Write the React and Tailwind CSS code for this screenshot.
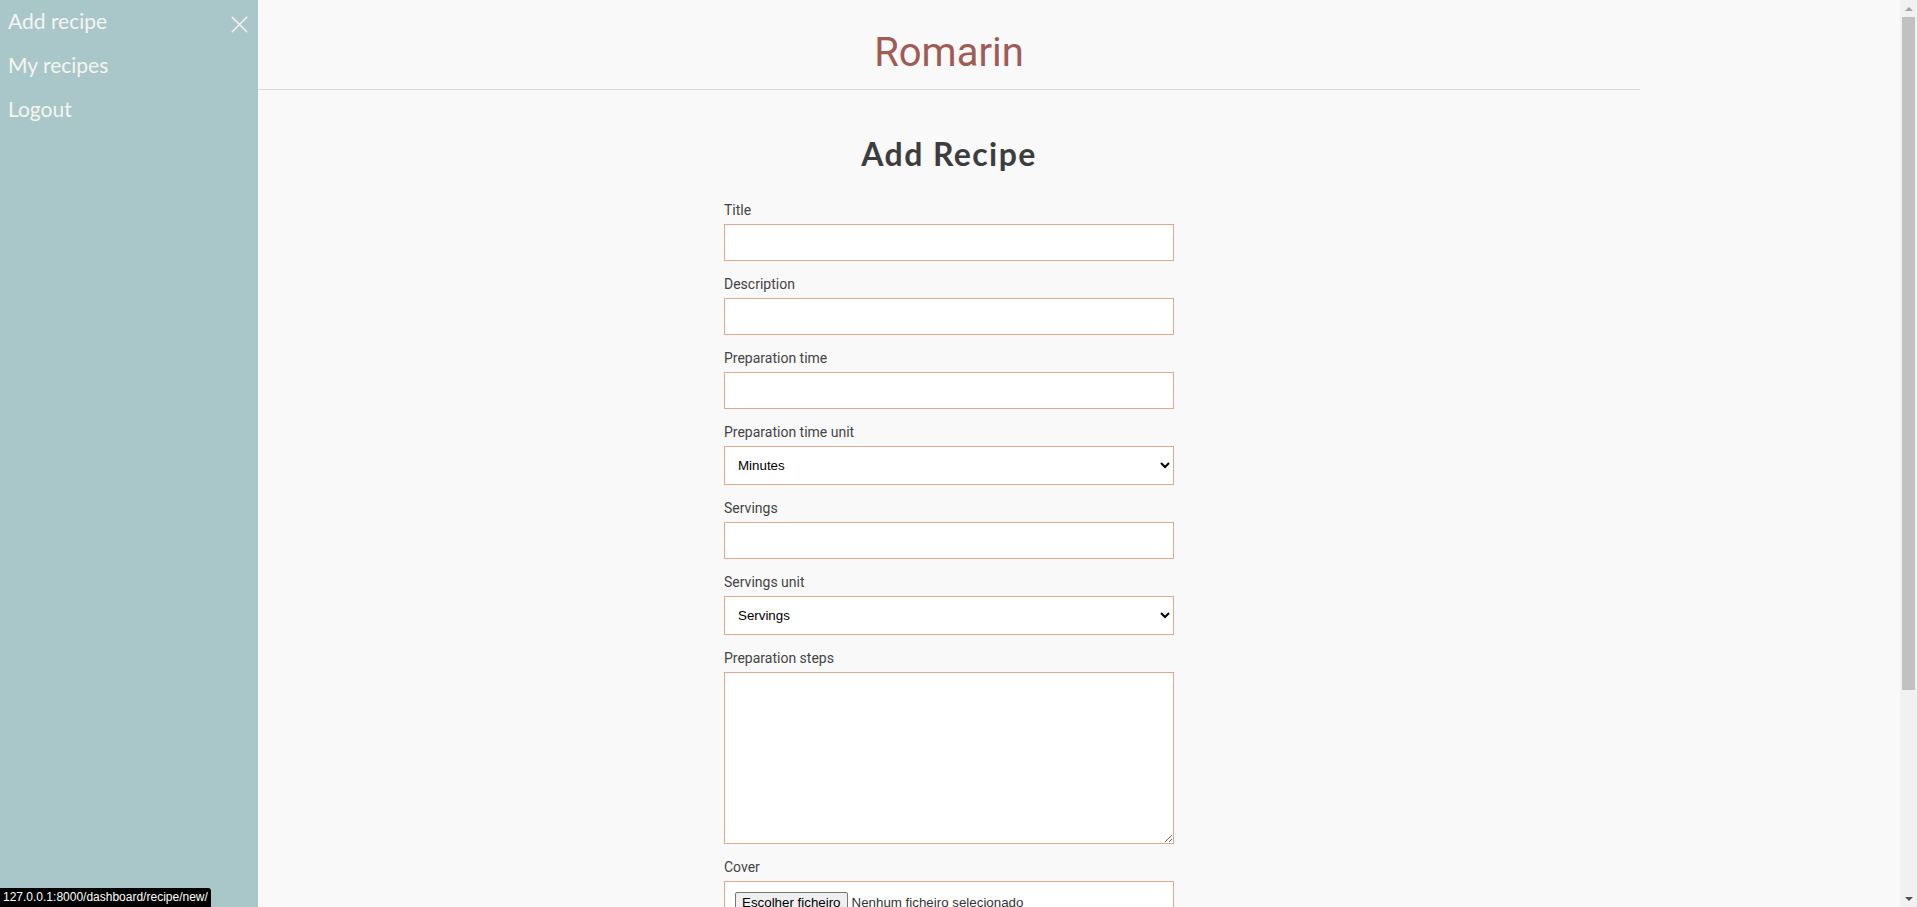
import { X } from "lucide-react";

const Field = ({ label, children }) => (
  <div className="flex flex-col shrink-0">
    <label className="text-[14px] leading-[20px] text-[#444] mb-[4px]">{label}</label>
    {children}
  </div>
);

const inputCls =
  "w-full h-[37px] shrink-0 bg-white border border-[#e0a88e] px-3 text-[14px] outline-none";
const selectCls =
  "w-full h-[39px] shrink-0 bg-white border border-[#e0a88e] pl-[9px] pr-[6px] text-[13.33px] text-black font-['Liberation_Sans',Arial,sans-serif] outline-none";

const Scrollbar = () => (
  <div className="w-[17px] h-full bg-[#f1f1f1] flex flex-col items-center shrink-0">
    <div className="h-[17px] w-full flex items-center justify-center shrink-0">
      <div className="w-0 h-0 border-l-[4px] border-r-[4px] border-b-[4px] border-l-transparent border-r-transparent border-b-[#a3a3a3]" />
    </div>
    <div className="w-[13px] h-[673px] bg-[#c1c1c1] shrink-0" />
    <div className="flex-1" />
    <div className="h-[17px] w-full flex items-center justify-center shrink-0">
      <div className="w-0 h-0 border-l-[4px] border-r-[4px] border-t-[4px] border-l-transparent border-r-transparent border-t-[#505050]" />
    </div>
  </div>
);

const App = () => {
  return (
    <div className="relative flex h-[907px] w-full overflow-hidden bg-[#f9f9f9] font-['Roboto',sans-serif]">
      {/* sidebar */}
      <aside className="w-[258px] shrink-0 h-full bg-[#a9c7c9] relative">
        <nav className="flex flex-col -mt-[1px] pl-[8px] text-[21px] leading-[44px] text-[#f4f5f1] font-['Lato',sans-serif]">
          <a href="#">Add recipe</a>
          <a href="#">My recipes</a>
          <a href="#">Logout</a>
        </nav>
        <button className="absolute top-[10px] left-[225px] text-[#f4f5f1]">
          <X size={29} strokeWidth={1.2} />
        </button>
      </aside>

      {/* main */}
      <main className="w-[1382px] shrink-0 flex flex-col">
        <header className="h-[90px] shrink-0 border-b border-[#dcdcdc] flex items-center justify-center pt-[16px]">
          <h1 className="text-[40px] text-[#a15b55] font-['Roboto',sans-serif]">Romarin</h1>
        </header>

        <div className="flex flex-col items-center shrink-0">
          <h2 className="mt-[44px] mb-[26px] text-[32px] leading-[40px] font-bold text-[#3d3d3d] font-['Lato',sans-serif] tracking-[1.4px]">
            Add Recipe
          </h2>

          <form className="w-[450px] flex flex-col gap-[13px]">
            <Field label="Title">
              <input type="text" className={inputCls} />
            </Field>
            <Field label="Description">
              <input type="text" className={inputCls} />
            </Field>
            <Field label="Preparation time">
              <input type="text" className={inputCls} />
            </Field>
            <Field label="Preparation time unit">
              <select className={selectCls} defaultValue="Minutes">
                <option>Minutes</option>
                <option>Hours</option>
              </select>
            </Field>
            <Field label="Servings">
              <input type="text" className={inputCls} />
            </Field>
            <Field label="Servings unit">
              <select className={selectCls} defaultValue="Servings">
                <option>Servings</option>
                <option>Pieces</option>
              </select>
            </Field>
            <Field label="Preparation steps">
              <textarea className="w-full h-[172px] shrink-0 bg-white border border-[#e0a88e] p-2 text-[14px] outline-none" />
            </Field>
            <Field label="Cover">
              <div className="w-full h-[60px] shrink-0 bg-white border border-[#e0a88e] pt-[10px] pl-[10px] flex items-start gap-[4px] text-[13.33px] font-['Liberation_Sans',Arial,sans-serif]">
                <button type="button" className="h-[21px] px-[6px] bg-[#efefef] border border-[#767676] rounded-[2px] text-black leading-[17px]">
                  Escolher ficheiro
                </button>
                <span className="text-[#333] leading-[21px]">Nenhum ficheiro selecionado</span>
              </div>
            </Field>
          </form>
        </div>
      </main>

      <div className="flex-1" />
      <Scrollbar />

      {/* browser status bubble */}
      <div className="absolute left-0 bottom-0 h-[19px] px-[3px] bg-black text-white text-[12px] leading-[19px] rounded-tr-[3px] font-['Liberation_Sans',Arial,sans-serif]">
        127.0.0.1:8000/dashboard/recipe/new/
      </div>
    </div>
  );
};

export default App;
